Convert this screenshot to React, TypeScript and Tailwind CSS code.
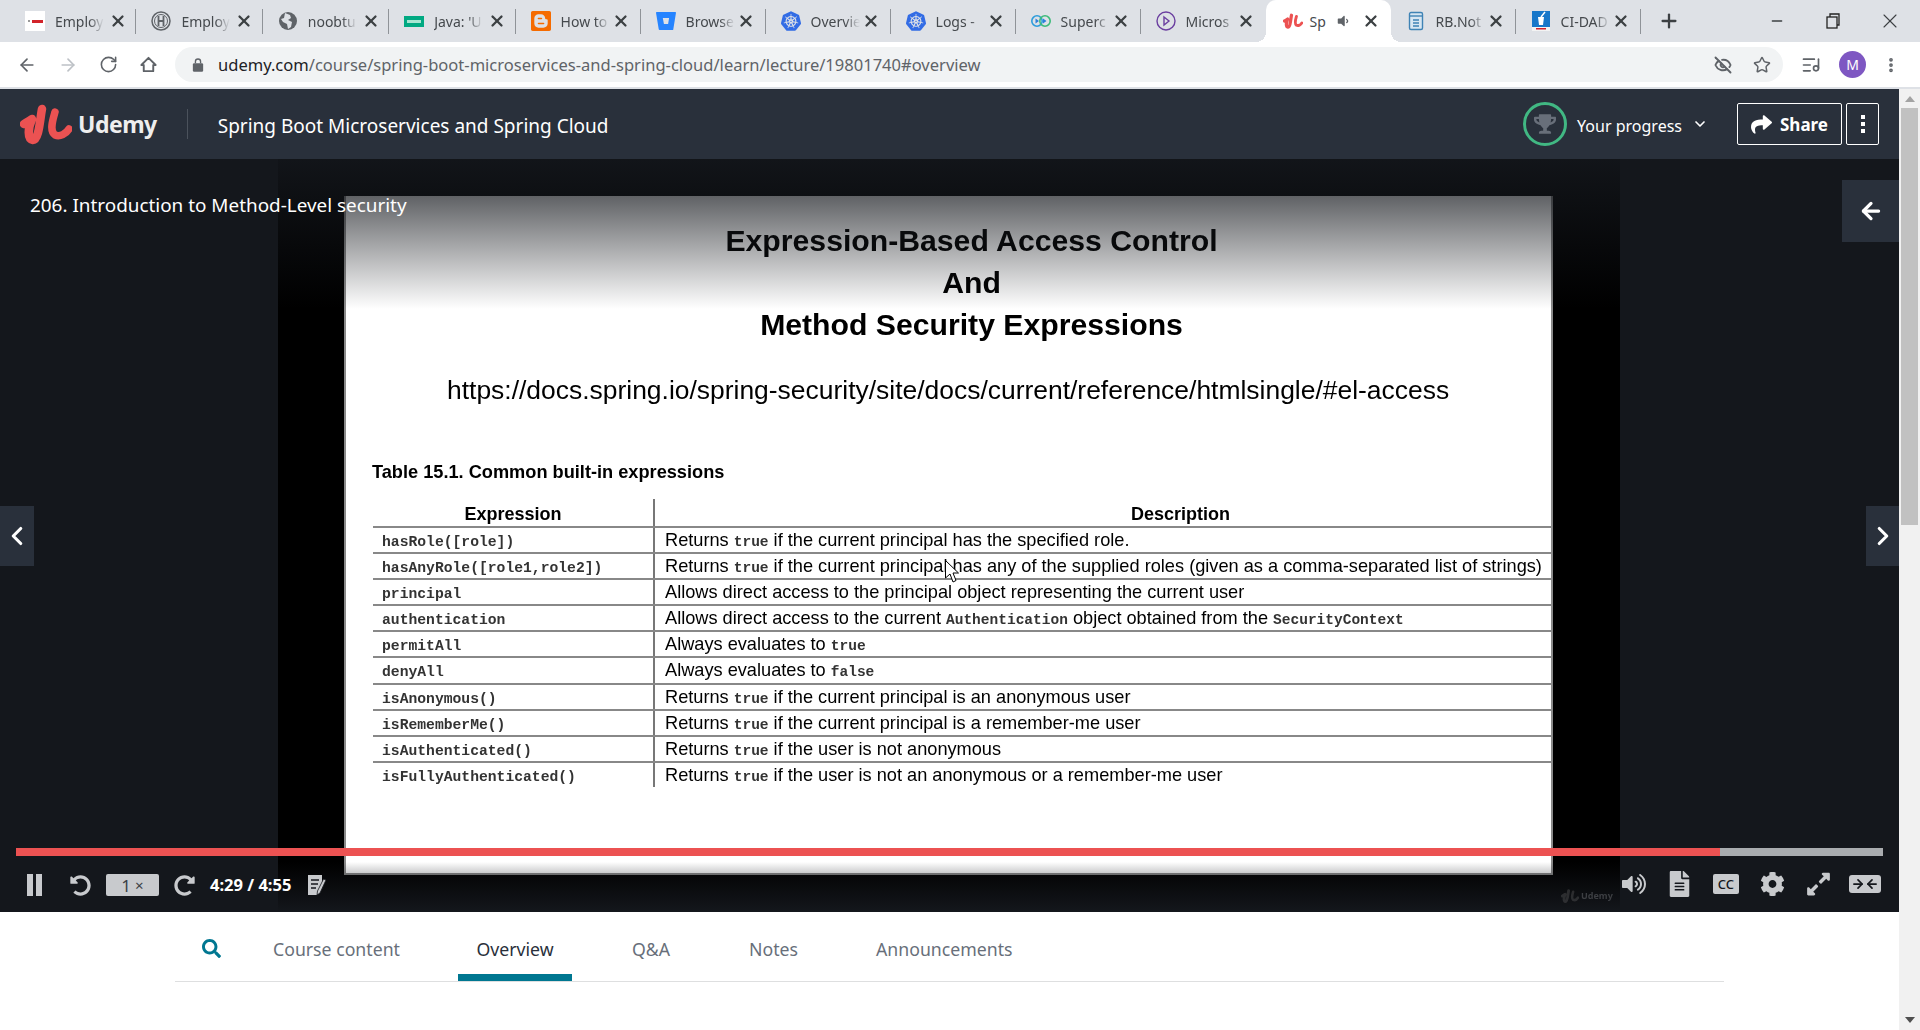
import { ArrowLeft, ArrowRight, ChevronDown, ChevronLeft, ChevronRight, Minus, Plus, RotateCw, Star, EyeOff, ListMusic, X, MoreVertical } from 'lucide-react';
import { FaCog, FaExpandAlt, FaFileAlt, FaRedoAlt, FaSearch, FaShare, FaTrophy, FaUndoAlt, FaVolumeDown, FaVolumeUp } from 'react-icons/fa';
import { SiBitbucket, SiBlogger, SiKubernetes } from 'react-icons/si';

const sans = 'font-["Noto_Sans",sans-serif]';

function UdemyMark({ className }: { className: string }) {
  return (
    <svg viewBox="0 0 52 42" className={className} fill="none" stroke="#ec5252" strokeLinecap="round" strokeLinejoin="round">
      <path d="M4 21 C6 20 9 18 12 16 C8 25 7 36 13 37 C19 37 20 16 22 6" strokeWidth="8.500" />
      <path d="M35 9 C33 16 29 28 35 32 C40 34 46 31 49 26" strokeWidth="7.500" />
    </svg>
  );
}

function Favicon({ kind }: { kind: string }) {
  if (kind === 'bosch') {
    return (
      <div className="w-5 h-5 bg-white flex items-center justify-center gap-[2px]">
        <div className="w-[2px] h-[2px] bg-[#999]" />
        <div className="w-[11px] h-[3px] bg-[#d2232a]" />
      </div>
    );
  }
  if (kind === 'hub') {
    return (
      <svg viewBox="0 0 20 20" className="w-5 h-5" fill="none" stroke="#5f6368">
        <circle cx="10" cy="10" r="9" strokeWidth="1.500" />
        <circle cx="10" cy="10" r="6.500" strokeWidth="1" />
        <path d="M7.500 5v10M12.500 5v10M7.500 10h5" strokeWidth="1.800" />
      </svg>
    );
  }
  if (kind === 'globe') {
    return (
      <svg viewBox="0 0 20 20" className="w-5 h-5">
        <circle cx="10" cy="10" r="9" fill="#5f6368" />
        <path d="M7 2l5 2 1 3-3 2 4 2-1 5-3 2-1-5-4-2-2-3 3-1z" fill="#dee1e6" />
      </svg>
    );
  }
  if (kind === 'java') {
    return (
      <div className="w-5 h-[11px] bg-[#01a982] flex items-center justify-center">
        <div className="w-[14px] h-[3px] bg-[#a8e6d2]" />
      </div>
    );
  }
  if (kind === 'blogger') {
    return <SiBlogger className="w-5 h-5 text-[#f56b00]" />;
  }
  if (kind === 'bitbucket') {
    return <SiBitbucket className="w-5 h-5 text-[#2684ff]" />;
  }
  if (kind === 'k8s') {
    return <SiKubernetes className="w-5 h-5 text-[#326ce5]" />;
  }
  if (kind === 'super') {
    return (
      <svg viewBox="0 0 20 20" className="w-5 h-5" fill="none" strokeWidth="1.600">
        <circle cx="6" cy="10" r="5.200" stroke="#2d9cdb" />
        <circle cx="14" cy="10" r="5.200" stroke="#3dbb7a" />
        <path d="M4.500 7.500l3.500 2.500-3.500 2.500zM12 7.500l3.500 2.500-3.500 2.500z" fill="#2d7fdb" stroke="none" />
      </svg>
    );
  }
  if (kind === 'ms') {
    return (
      <svg viewBox="0 0 20 20" className="w-5 h-5" fill="none" stroke="#6b3fa0" strokeWidth="1.400">
        <circle cx="10" cy="10" r="9" />
        <path d="M8 6l5 4-5 4z" />
      </svg>
    );
  }
  if (kind === 'udemy') {
    return <UdemyMark className="w-5 h-5" />;
  }
  if (kind === 'doc') {
    return (
      <svg viewBox="0 0 20 20" className="w-5 h-5" fill="none">
        <rect x="3.500" y="1.500" width="13" height="17" rx="1.500" fill="#d7e6f2" stroke="#3f83b5" strokeWidth="1.400" />
        <path d="M3.500 5h13" stroke="#3f83b5" strokeWidth="1.400" />
        <path d="M7 9h6M7 12h6M7 15h6" stroke="#3f83b5" strokeWidth="1.300" />
      </svg>
    );
  }
  return (
    <svg viewBox="0 0 20 20" className="w-5 h-5">
      <rect x="1" y="0" width="18" height="16" fill="#1877c9" />
      <path d="M7 6h6l-1 8H8z" fill="#fff" />
      <path d="M10 6l4-5" stroke="#fff" strokeWidth="1.500" />
      <rect x="1" y="16" width="18" height="4" fill="#f3f3f3" />
      <rect x="5" y="17" width="10" height="1.500" fill="#d2232a" />
    </svg>
  );
}

const tabs = [
  { icon: 'bosch', label: 'Employ', wide: true },
  { icon: 'hub', label: 'Employ', wide: true },
  { icon: 'globe', label: 'noobtu', wide: true },
  { icon: 'java', label: "Java: 'U", wide: true },
  { icon: 'blogger', label: 'How to' },
  { icon: 'bitbucket', label: 'Browse' },
  { icon: 'k8s', label: 'Overvie' },
  { icon: 'k8s', label: 'Logs -' },
  { icon: 'super', label: 'Superc' },
  { icon: 'ms', label: 'Micros', noSep: true },
  { icon: 'udemy', label: 'Sp', active: true },
  { icon: 'doc', label: 'RB.Not' },
  { icon: 'ci', label: 'CI-DAD' },
];

const rows: { code: string; desc: (string | { c: string })[] }[] = [
  { code: 'hasRole([role])', desc: ['Returns ', { c: 'true' }, ' if the current principal has the specified role.'] },
  { code: 'hasAnyRole([role1,role2])', desc: ['Returns ', { c: 'true' }, ' if the current principal has any of the supplied roles (given as a comma-separated list of strings)'] },
  { code: 'principal', desc: ['Allows direct access to the principal object representing the current user'] },
  { code: 'authentication', desc: ['Allows direct access to the current ', { c: 'Authentication' }, ' object obtained from the ', { c: 'SecurityContext' }] },
  { code: 'permitAll', desc: ['Always evaluates to ', { c: 'true' }] },
  { code: 'denyAll', desc: ['Always evaluates to ', { c: 'false' }] },
  { code: 'isAnonymous()', desc: ['Returns ', { c: 'true' }, ' if the current principal is an anonymous user'] },
  { code: 'isRememberMe()', desc: ['Returns ', { c: 'true' }, ' if the current principal is a remember-me user'] },
  { code: 'isAuthenticated()', desc: ['Returns ', { c: 'true' }, ' if the user is not anonymous'] },
  { code: 'isFullyAuthenticated()', desc: ['Returns ', { c: 'true' }, ' if the user is not an anonymous or a remember-me user'] },
];

function TabStrip() {
  return (
    <div className={`relative h-[42px] bg-[#dee1e6] flex items-stretch pl-[10px] ${sans}`}>
      {tabs.map((t, i) =>
        t.active ? (
          <div key={i} className="relative w-[125px] h-[42px] flex items-center pl-[17px] bg-white rounded-t-[10px] shrink-0">
            <div className="absolute bottom-0 -left-[10px] w-[10px] h-[10px] bg-[radial-gradient(circle_at_0_0,transparent_10px,white_10px)]" />
            <div className="absolute bottom-0 -right-[10px] w-[10px] h-[10px] bg-[radial-gradient(circle_at_100%_0,transparent_10px,white_10px)]" />
            <Favicon kind={t.icon} />
            <span className="ml-[7px] w-[20px] text-[14px] text-[#45494d] whitespace-nowrap">{t.label}</span>
            <FaVolumeDown className="ml-[6px] w-[14px] h-[14px] text-[#5f6368] shrink-0" />
            <X className="ml-[12px] w-[18px] h-[18px] text-[#3c4043] shrink-0" strokeWidth={3} />
          </div>
        ) : (
          <div key={i} className={`h-[42px] flex items-center pl-[15px] shrink-0 ${t.wide ? 'w-[126.400px]' : 'w-[125px]'}`}>
            <div className="w-5 flex items-center justify-center shrink-0">
              <Favicon kind={t.icon} />
            </div>
            <span className="ml-[10px] w-[49px] text-[14px] text-[#45494d] whitespace-nowrap overflow-hidden shrink-0 [mask-image:linear-gradient(to_right,black_70%,transparent)]">{t.label}</span>
            <X className={`w-[18px] h-[18px] text-[#3c4043] shrink-0 ${t.wide ? 'ml-[5px]' : 'ml-[2px]'}`} strokeWidth={3} />
            <div className="flex-1" />
            {!t.noSep && <div className="w-px h-[25px] bg-[#8f9398] shrink-0" />}
          </div>
        ),
      )}
      <div className="w-[56px] ml-[2px] flex items-center justify-center">
        <Plus className="w-[22px] h-[22px] text-[#3c4043]" strokeWidth={2.500} />
      </div>
      <div className="w-[56.500px]" />
      <div className="flex items-center w-[59px] justify-center">
        <Minus className="w-4 h-4 text-[#3c4043]" />
      </div>
      <div className="flex items-center w-[59px] justify-center">
        <svg viewBox="0 0 16 16" className="w-4 h-4" fill="none" stroke="#222" strokeWidth="1.300">
          <rect x="2" y="4" width="10" height="11" fill="#dee1e6" />
          <path d="M5 4V1h9v11h-2" />
        </svg>
      </div>
      <div className="flex items-center w-[63px] justify-center">
        <X className="w-[24px] h-[24px] text-[#3c4043]" strokeWidth={1.100} />
      </div>
    </div>
  );
}

function AddressBar() {
  return (
    <div className={`h-[47px] bg-white border-b-2 border-[#dee1e6] flex items-center ${sans}`}>
      <div className="flex items-center w-[175px] pl-[17px] shrink-0">
        <ArrowLeft className="w-[20px] h-[20px] text-[#5f6368]" strokeWidth={2} />
        <ArrowRight className="ml-[21px] w-[20px] h-[20px] text-[#bdc1c6]" strokeWidth={2} />
        <RotateCw className="ml-[21px] w-[19px] h-[19px] text-[#5f6368]" strokeWidth={2} />
        <svg viewBox="0 0 20 20" className="ml-[21px] w-[19px] h-[19px]" fill="none" stroke="#5f6368" strokeWidth="2">
          <path d="M10 3 L2.500 10.500 H5 V17 H15 V10.500 H17.500 Z" strokeLinejoin="round" />
        </svg>
      </div>
      <div className="w-[1608px] h-[35px] bg-[#f1f3f4] rounded-full flex items-center pl-[17px] pr-[12px] shrink-0">
        <svg viewBox="0 0 14 16" className="w-[12px] h-[14px] shrink-0" fill="#5f6368">
          <rect x="1" y="6" width="12" height="10" rx="1.500" />
          <path d="M4 6V4a3 3 0 0 1 6 0v2" fill="none" stroke="#5f6368" strokeWidth="1.600" />
        </svg>
        <span className="ml-[14px] pt-[1px] text-[16.550px] text-[#5f6368] whitespace-nowrap"><span className="text-[#202124]">udemy.com</span>/course/spring-boot-microservices-and-spring-cloud/learn/lecture/19801740#overview</span>
        <div className="flex-1" />
        <EyeOff className="w-[18px] h-[18px] text-[#5f6368] mr-[21px]" strokeWidth={2.500} />
        <Star className="w-[18px] h-[18px] text-[#5f6368]" strokeWidth={2} />
      </div>
      <ListMusic className="ml-[18px] w-[20px] h-[20px] text-[#5f6368] shrink-0" />
      <div className="ml-[18px] w-[27px] h-[27px] rounded-full bg-[#7e57c2] text-white text-[14px] flex items-center justify-center shrink-0">M</div>
      <MoreVertical className="ml-[16px] w-[18px] h-[18px] text-[#5f6368] shrink-0" strokeWidth={3} />
    </div>
  );
}

function CourseHeader() {
  return (
    <div className={`h-[70px] bg-[#29303b] flex items-center ${sans}`}>
      <UdemyMark className="ml-[20px] w-[52px] h-[42px] shrink-0" />
      <span className="ml-[6px] text-[23px] font-bold text-[#eeeeee] tracking-[-0.500px]">Udemy</span>
      <div className="ml-[30px] w-px h-[30px] bg-[#4b525c]" />
      <span className="ml-[30px] pt-[4px] text-[19px] text-white whitespace-nowrap">Spring Boot Microservices and Spring Cloud</span>
      <div className="flex-1" />
      <div className="w-[44px] h-[44px] rounded-full border-[3px] border-[#41b883] flex items-center justify-center">
        <FaTrophy className="w-[22px] h-[22px] text-[#686f7a]" />
      </div>
      <span className="ml-[10px] pt-[3px] text-[16px] text-white">Your progress</span>
      <ChevronDown className="ml-[10px] w-[16px] h-[16px] text-white" strokeWidth={2.500} />
      <div className="ml-[29px] h-[42px] w-[105px] border border-white rounded-[2px] flex items-center justify-center gap-[8px]">
        <FaShare className="w-[21px] h-[21px] text-white" />
        <span className="pt-[2px] text-[17px] font-bold text-white">Share</span>
      </div>
      <div className="ml-[4px] mr-[20px] h-[42px] w-[33px] border border-white rounded-[2px] flex flex-col items-center justify-center gap-[3px]">
        <div className="w-[4px] h-[4px] bg-white" />
        <div className="w-[4px] h-[4px] bg-white" />
        <div className="w-[4px] h-[4px] bg-white" />
      </div>
      <div className="w-[21px]" />
    </div>
  );
}

function Slide() {
  return (
    <div className="w-[1209px] h-[679px] bg-white border-b-2 border-x-2 border-[#8a8a8a] font-['Liberation_Sans',sans-serif] text-black flex flex-col blur-[0.300px]">
      <div className="pt-[24px] pl-[46px] flex flex-col items-center font-bold text-[30.200px] leading-[42px]">
        <span>Expression-Based Access Control</span>
        <span>And</span>
        <span>Method Security Expressions</span>
      </div>
      <div className="mt-[24px] text-[26.450px] leading-[40px] pl-[101px] whitespace-nowrap">https://docs.spring.io/spring-security/site/docs/current/reference/htmlsingle/#el-access</div>
      <div className="mt-[49px] ml-[26px] text-[18.200px] font-bold leading-[26px]">Table 15.1. Common built-in expressions</div>
      <div className="mt-[14px] ml-[27px] flex flex-col">
        <div className="flex h-[27px]">
          <div className="w-[282px] border-r-2 border-[#777] text-center font-bold text-[18px] leading-[30px]">Expression</div>
          <div className="flex-1 text-center font-bold text-[18px] leading-[30px] pl-[155px]">Description</div>
        </div>
        {rows.map((r, i) => (
          <div key={i} className="flex h-[26.100px] border-t-2 border-[#888]">
            <div className="w-[282px] border-r-2 border-[#777] pl-[9px] font-['Liberation_Mono',monospace] font-bold text-[14.700px] leading-[28px] text-[#333] whitespace-nowrap">{r.code}</div>
            <div className="flex-1 pl-[10px] text-[18.200px] leading-[24px] whitespace-nowrap">
              {r.desc.map((d, j) =>
                typeof d === 'string' ? (
                  <span key={j}>{d}</span>
                ) : (
                  <span key={j} className="font-['Liberation_Mono',monospace] font-bold text-[14.500px] text-[#333]">{d.c}</span>
                ),
              )}
            </div>
          </div>
        ))}
      </div>
    </div>
  );
}

function Player() {
  return (
    <div className={`relative h-[753px] bg-[#14171c] overflow-hidden mr-[21px] ${sans}`}>
      <div className="ml-[278px] w-[1342px] h-full bg-black pt-[37px] pl-[66px]">
        <Slide />
      </div>

      {/* mouse cursor burnt into the video */}
      <svg viewBox="0 0 14 23" className="absolute left-[945px] top-[401px] w-[14px] h-[23px]">
        <path d="M0.500 0.500V18L5 14l3 8 3-1.500-3-7.500h5.500z" fill="#fff" stroke="#000" strokeWidth="1" />
      </svg>

      <div className="absolute top-0 left-0 right-0 h-[150px] bg-gradient-to-b from-[#14171c]/90 to-transparent" />
      <div className="absolute top-[34px] left-[30px] text-[18.900px] leading-[24px] text-white whitespace-nowrap">206. Introduction to Method-Level security</div>

      <div className="absolute top-[21px] right-0 w-[57px] h-[62px] bg-[#29303b] flex items-center justify-center">
        <ArrowLeft className="w-[26px] h-[26px] text-white" strokeWidth={3} />
      </div>
      <div className="absolute top-[347px] left-0 w-[34px] h-[60px] bg-[#29303b] flex items-center justify-center">
        <ChevronLeft className="w-[30px] h-[30px] text-white" strokeWidth={2.500} />
      </div>
      <div className="absolute top-[347px] right-0 w-[33px] h-[60px] bg-[#29303b] flex items-center justify-center">
        <ChevronRight className="w-[30px] h-[30px] text-white" strokeWidth={2.500} />
      </div>

      <div className="absolute left-0 right-0 bottom-0 h-[50px] bg-gradient-to-t from-[#14171c] to-transparent" />
      <div className="absolute left-[16px] bottom-[56px] w-[1867px] h-[8px] bg-[#a9acaf]">
        <div className="w-[1704px] h-full bg-[#ec5252]" />
      </div>

      {/* left controls */}
      <div className="absolute left-[27px] bottom-[16px] h-[22px] flex items-center text-[#c8cacd]">
        <div className="flex gap-[3px]">
          <div className="w-[6px] h-[22px] bg-[#c8cacd]" />
          <div className="w-[6px] h-[22px] bg-[#c8cacd]" />
        </div>
        <FaUndoAlt className="ml-[28px] w-[21px] h-[21px]" />
        <div className="ml-[15px] w-[53px] h-[22px] bg-[#c8cacd] rounded-[2px] text-[#3a3f46] flex items-center justify-center gap-[4px]">
          <span className="text-[17px] leading-none">1</span>
          <span className="text-[15px] leading-none">×</span>
        </div>
        <FaRedoAlt className="ml-[15px] w-[21px] h-[21px]" />
        <span className="ml-[15px] text-[16.500px] font-bold text-white whitespace-nowrap">4:29 / 4:55</span>
        <svg viewBox="0 0 20 22" className="ml-[16px] w-[20px] h-[22px]">
          <path d="M1 1h14v9l-5 11H1z" fill="#c8cacd" />
          <path d="M4 6h8M4 10h7M4 14h5" stroke="#14171c" strokeWidth="1.600" />
          <path d="M19 6l-6 13-3 2 .5-4L16.500 5z" fill="#c8cacd" stroke="#14171c" strokeWidth=".8" />
        </svg>
      </div>

      {/* right controls */}
      <div className="absolute left-[1622px] bottom-[15px] h-[26px] flex items-center text-[#c8cacd]">
        <FaVolumeUp className="w-[24px] h-[22px]" />
        <FaFileAlt className="ml-[22px] w-[23px] h-[26px]" />
        <div className="ml-[22px] w-[26px] h-[20px] bg-[#c8cacd] rounded-[2px] text-[#14171c] text-[13px] font-medium leading-none flex items-center justify-center">CC</div>
        <FaCog className="ml-[21px] w-[25px] h-[26px]" />
        <FaExpandAlt className="ml-[20px] w-[27px] h-[26px]" />
        <div className="ml-[17px] w-[32px] h-[18px] bg-[#c8cacd] rounded-[3px] flex items-center justify-center text-[#14171c]">
          <ArrowRight className="w-[14px] h-[14px]" strokeWidth={3} />
          <ArrowLeft className="w-[14px] h-[14px]" strokeWidth={3} />
        </div>
      </div>

      <div className="absolute left-[1561px] bottom-[8px] flex items-center gap-[2px] text-[#3d3f43] blur-[0.500px]">
        <UdemyMark className="w-[18px] h-[16px] opacity-30 grayscale" />
        <span className="text-[9px] font-bold">Udemy</span>
      </div>
    </div>
  );
}

function LectureTabs() {
  return (
    <div className={`h-[118px] bg-white mr-[21px] ${sans}`}>
      <div className="ml-[175px] w-[1549px] h-[70px] border-b border-[#dedfe0] flex items-start">
        <div className="w-[72px] h-[69px] flex items-center justify-center pt-[3px]">
          <FaSearch className="w-[19px] h-[19px] text-[#007791]" />
        </div>
        <div className="ml-[26px] h-[69px] pt-[5px] flex items-center text-[17.700px] text-[#686f7a]">Course content</div>
        <div className="ml-[58px] w-[114px] h-[69px] flex items-center justify-center text-[17.700px] text-[#29303b] border-b-[7px] border-[#007791] pt-[12px]">Overview</div>
        <div className="ml-[60px] h-[69px] pt-[5px] flex items-center text-[17.700px] text-[#686f7a]">Q&amp;A</div>
        <div className="ml-[79px] h-[69px] pt-[5px] flex items-center text-[17.700px] text-[#686f7a]">Notes</div>
        <div className="ml-[78px] h-[69px] pt-[5px] flex items-center text-[17.700px] text-[#686f7a]">Announcements</div>
      </div>
    </div>
  );
}

export default function App() {
  return (
    <div className="relative w-[1920px] h-[1030px] overflow-hidden bg-white">
      <TabStrip />
      <AddressBar />
      <CourseHeader />
      <Player />
      <LectureTabs />
      {/* page scrollbar */}
      <div className="absolute top-[89px] right-0 bottom-0 w-[21px] bg-[#f1f1f1] flex flex-col items-center">
        <div className="mt-[7px] w-0 h-0 border-x-[5px] border-x-transparent border-b-[6px] border-b-[#a3a3a3]" />
        <div className="mt-[6px] w-[17px] h-[417px] bg-[#c1c1c1]" />
        <div className="flex-1" />
        <div className="mb-[7px] w-0 h-0 border-x-[5px] border-x-transparent border-t-[6px] border-t-[#505050]" />
      </div>
    </div>
  );
}
